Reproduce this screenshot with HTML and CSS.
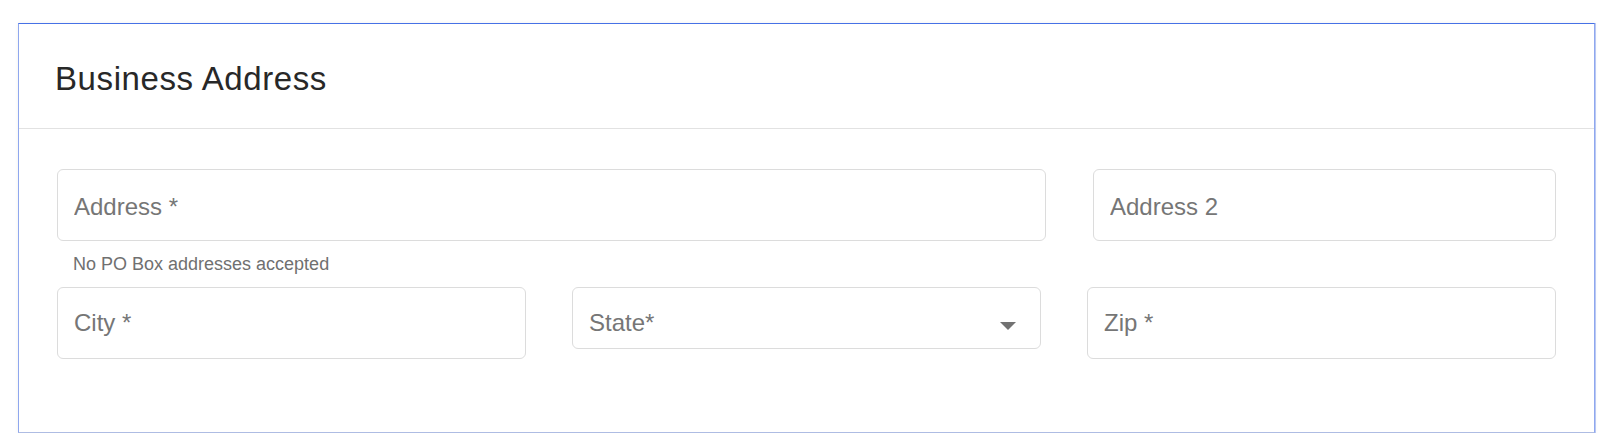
FILE: index.html
```html
<!DOCTYPE html>
<html>
<head>
    <meta charset="utf-8">
    <meta content="width=device-width, initial-scale=1" name="viewport">
    <title>Business Address</title>
    <link rel="stylesheet" href="styles.css">
</head>
<body>
<div class="card">
    <div class="card-head">
        <h2>Business Address</h2>
    </div>
    <div class="card-body">
        <div class="row row-top">
            <div class="field">
                <input class="box" type="text" placeholder="Address *">
                <div class="hint">No PO Box addresses accepted</div>
            </div>
            <div class="field">
                <input class="box" type="text" placeholder="Address 2">
            </div>
        </div>
        <div class="row row-bottom">
            <div class="field">
                <input class="box" type="text" placeholder="City *">
            </div>
            <div class="field">
                <div class="box select">
                    <span class="select-label">State*</span>
                    <span class="caret"></span>
                </div>
            </div>
            <div class="field">
                <input class="box" type="text" placeholder="Zip *">
            </div>
        </div>
    </div>
</div>
</body>
</html>
```

FILE: styles.css
```css
body {
    margin: 0;
    padding: 23px 0 0 18px;
    background: #fff;
    font-family: "Liberation Sans", Arial, sans-serif;
}

.card {
    box-sizing: border-box;
    width: 1577px;
    height: 410px;
    border: 1px solid #8fa7ee;
    border-top-color: #4671e6;
    border-bottom-color: #aebce3;
    box-shadow: 1px 0 0 #b9c8f3, 0 0 4px rgba(0, 0, 0, 0.06);
    background: #fff;
}

.card-head {
    box-sizing: content-box;
    height: 69px;
    padding: 35px 36px 0;
    border-bottom: 1px solid #e2e2e2;
}

.card-head h2 {
    margin: 0;
    font-size: 33px;
    line-height: 40px;
    font-weight: normal;
    letter-spacing: 0.6px;
    color: #282828;
}

.card-body {
    padding: 40px 38px 0;
}

.row {
    display: grid;
    align-items: start;
}

.row-top {
    grid-template-columns: 989fr 463fr;
    column-gap: 47px;
}

.row-bottom {
    grid-template-columns: 1fr 1fr 1fr;
    column-gap: 46px;
}

.box {
    display: block;
    box-sizing: border-box;
    width: 100%;
    height: 72px;
    margin: 0;
    padding: 21px 16px;
    border: 1px solid #dcdcdc;
    border-radius: 6px;
    background: #fff;
    font-family: "Liberation Sans", Arial, sans-serif;
    font-size: 24px;
    line-height: 28px;
    color: #333;
    outline: none;
}

.row-top .box {
    padding-top: 23px;
    padding-bottom: 19px;
}

.box::placeholder {
    color: #767676;
    opacity: 1;
}

.hint {
    margin: 11px 0 11px;
    padding-left: 16px;
    font-size: 18px;
    line-height: 24px;
    color: #707070;
}

.select {
    display: flex;
    align-items: flex-start;
    height: 62px;
    padding-bottom: 0;
    color: #767676;
}

.select-label {
    flex: 1;
}

.caret {
    width: 0;
    height: 0;
    margin: 13px 8px 0 0;
    border-left: 8px solid transparent;
    border-right: 8px solid transparent;
    border-top: 8px solid #727272;
}
```
